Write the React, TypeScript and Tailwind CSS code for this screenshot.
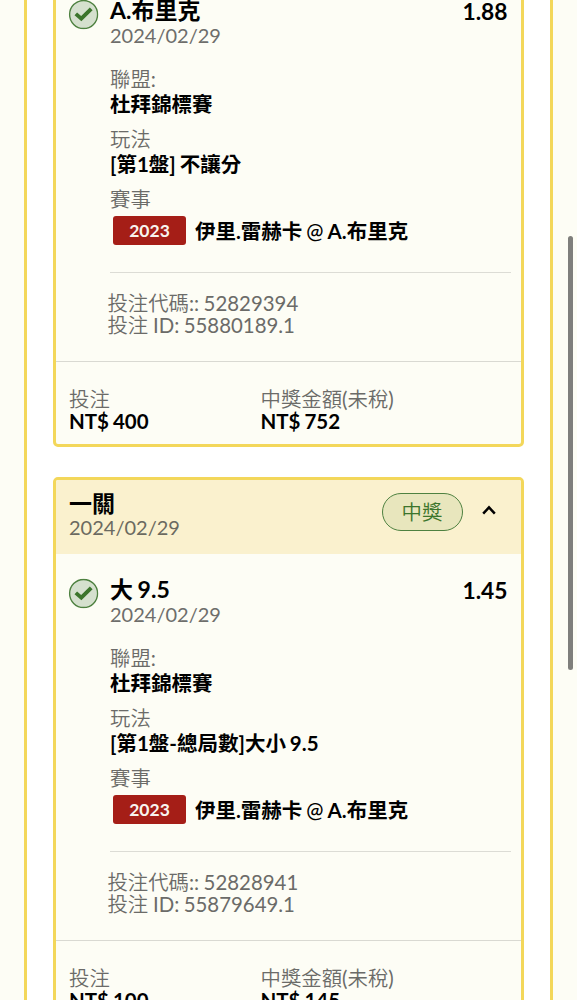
type Bet = {
  title: string;
  odds: string;
  play: string;
  code: string;
  id: string;
  stake: string;
  payout: string;
};

const bets: Bet[] = [
  { title: "A.布里克", odds: "1.88", play: "[第1盤] 不讓分", code: "52829394", id: "55880189.1", stake: "NT$ 400", payout: "NT$ 752" },
  { title: "大 9.5", odds: "1.45", play: "[第1盤-總局數]大小 9.5", code: "52828941", id: "55879649.1", stake: "NT$ 100", payout: "NT$ 145" },
];

const label = "text-[20.4px] font-[350] text-[#6b6b68]";
const value = "text-[20.5px] font-bold text-black [word-spacing:-1px]";

function WonIcon() {
  return (
    <svg viewBox="0 0 30 30" className="h-[30px] w-[30px] shrink-0 translate-x-[0.6px] translate-y-[0.5px]">
      <circle cx="15" cy="15" r="14" fill="#d5e0ce" stroke="#4e8140" strokeWidth="1.4" />
      <path d="M7.2 14.4 12.7 19.2 22.6 9.4" fill="none" stroke="#3c752c" strokeWidth="3.9" />
    </svg>
  );
}

function BetCard({ bet }: { bet: Bet }) {
  return (
    <article className="h-[549px] shrink-0 overflow-hidden rounded-[5px] border-3 border-[#f3d75a] bg-[#fdfdf5]">
      <header className="flex h-[74px] items-start bg-[#faf1ce] pl-[13px] pr-[25px] pt-[12px]">
        <div className="flex-1">
          <h2 className="-mt-px h-[24px] text-[23px] font-bold leading-[24px] text-black">一關</h2>
          <p className="h-[24px] text-[20px] leading-[24px] text-[#6b6a60]">2024/02/29</p>
        </div>
        <div className="mt-px flex h-[38px] w-[81px] items-center justify-center rounded-full border-[1.5px] border-[#4e8140] bg-[#e8e6bd] text-[20.4px] font-[350] text-[#3c752c]">
          中獎
        </div>
        <svg viewBox="0 0 14 10" className="ml-[19px] mt-[13px] h-[10px] w-[14px]">
          <path d="M1.2 8.6 7 2.4l5.8 6.2" fill="none" stroke="#000" strokeWidth="2.5" />
        </svg>
      </header>

      <div className="h-[387px] border-b border-[#d9d9d2] pl-[12px] pr-[10px] pt-[24px]">
        <div className="flex">
          <WonIcon />
          <div className="ml-[12px] flex-1">
            <div className="flex h-[24px] justify-between pr-[3px] text-[23px] font-bold text-black [word-spacing:-1px]">
              <span className="leading-[22px]">{bet.title}</span>
              <span className="text-[22.8px] leading-[24px]">{bet.odds}</span>
            </div>
            <p className="h-[44px] text-[20px] leading-[24px] text-[#6e6e6b]">2024/02/29</p>
            <dl className="leading-[25px]">
              <dt className={label}>聯盟<span className="font-normal">:</span></dt>
              <dd className={value + " mb-[10px]"}>杜拜錦標賽</dd>
              <dt className={label}>玩法</dt>
              <dd className={value + " mb-[10px]"}>{bet.play}</dd>
              <dt className={label}>賽事</dt>
              <dd className="mt-[3px] flex h-[30px] items-center pl-[3px]">
                <span className="flex h-[29px] w-[73px] items-center justify-center rounded-[3px] bg-[#a51e17] text-[17.5px] font-bold text-[#f8f4ef]">2023</span>
                <span className={value + " ml-[9px] whitespace-nowrap pt-[2px]"}>
                  伊里.雷赫卡 <span className="font-medium">@</span> A.布里克
                </span>
              </dd>
            </dl>
            <div className="mt-[27px] h-px bg-[#dcdcd5]" />
            <div className="-ml-[2.6px] mt-[19px] text-[20.4px] font-[350] leading-[22px] text-[#6b6b68] [word-spacing:-0.8px]">
              <p>投注代碼<span className="font-normal">:: {bet.code}</span></p>
              <p>投注 <span className="font-normal">ID: {bet.id}</span></p>
            </div>
          </div>
        </div>
      </div>

      <footer className="grid grid-cols-[191.5px_1fr] pl-[13px] pt-[26px] leading-[22px]">
        <div>
          <p className={label}>投注</p>
          <p className={value}>{bet.stake}</p>
        </div>
        <div>
          <p className={label}>
            中獎金額<span className="font-normal">(</span>未稅<span className="font-normal">)</span>
          </p>
          <p className={value}>{bet.payout}</p>
        </div>
      </footer>
    </article>
  );
}

export default function App() {
  return (
    <main className="relative h-[1000px] w-[577px] overflow-hidden bg-[#fdfdf5] pl-[23.5px] font-['Lato','Noto_Sans_CJK_TC',sans-serif]">
      <section className="h-full w-[529.5px] overflow-hidden border-x-3 border-[#f3d75a] bg-white px-[26.5px]">
        <div className="-mt-[102px] flex flex-col gap-[30px]">
          {bets.map((bet) => (
            <BetCard key={bet.id} bet={bet} />
          ))}
        </div>
      </section>
      <div className="absolute left-[568px] top-[236px] h-[434px] w-[5px] rounded-full bg-[#7f7f7c]" />
    </main>
  );
}
